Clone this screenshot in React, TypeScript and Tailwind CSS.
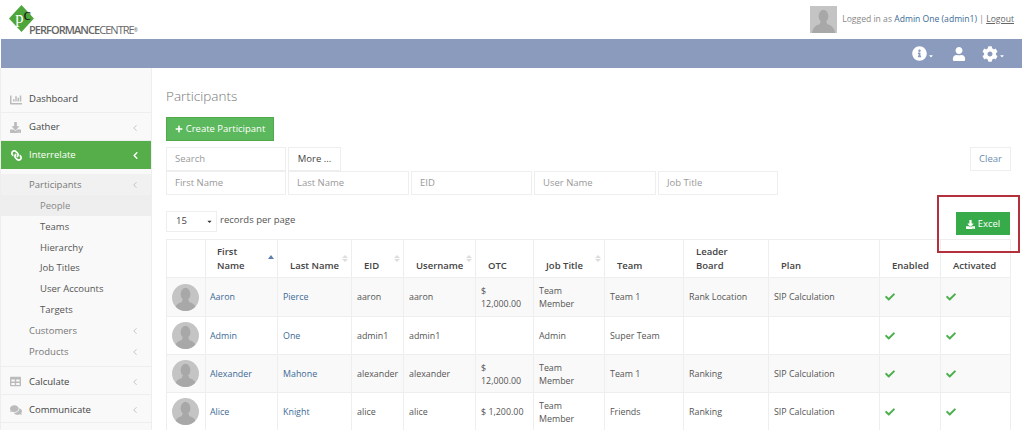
import { ChevronLeft } from "lucide-react";
import { FaCaretDown, FaChartBar, FaCheck, FaCog, FaComments, FaDownload, FaInfoCircle, FaLink, FaPlus, FaTable, FaUser } from "react-icons/fa";

const people = [
  { first: "Aaron", last: "Pierce", eid: "aaron", user: "aaron", otc: ["$", "12,000.00"], job: ["Team", "Member"], team: "Team 1", board: "Rank Location", plan: "SIP Calculation" },
  { first: "Admin", last: "One", eid: "admin1", user: "admin1", otc: [], job: ["Admin"], team: "Super Team", board: "", plan: "" },
  { first: "Alexander", last: "Mahone", eid: "alexander", user: "alexander", otc: ["$", "12,000.00"], job: ["Team", "Member"], team: "Team 1", board: "Ranking", plan: "SIP Calculation" },
  { first: "Alice", last: "Knight", eid: "alice", user: "alice", otc: ["$ 1,200.00"], job: ["Team", "Member"], team: "Friends", board: "Ranking", plan: "SIP Calculation" },
];

function Silhouette({ round }: { round?: boolean }) {
  return (
    <svg viewBox="0 0 28 28" className={round ? "h-[27px] w-[27px] rounded-full" : "h-[27px] w-[27px]"}>
      <rect width="28" height="28" fill="#c4c4c4" />
      <ellipse cx="14" cy="10.5" rx="5" ry="6.5" fill="#a8a8a8" />
      <path d="M11 16 L17 16 L18 19 Q25 20.5 26 28 L2 28 Q3 20.5 10 19 Z" fill="#a8a8a8" />
    </svg>
  );
}

function SortArrows({ active }: { active?: boolean }) {
  return (
    <span className="absolute right-[3px] top-[15px] flex flex-col gap-[1px]">
      <span className={active ? "h-0 w-0 border-x-[3px] border-b-[4px] border-x-transparent border-b-[#5b7fb0]" : "h-0 w-0 border-x-[3px] border-b-[3px] border-x-transparent border-b-[#dddddd]"} />
      {!active && <span className="h-0 w-0 border-x-[3px] border-t-[3px] border-x-transparent border-t-[#dddddd]" />}
    </span>
  );
}

function SideItem({ icon, label, top }: { icon: React.ReactNode; label: string; top?: boolean }) {
  return (
    <div className="flex h-[28px] items-center border-b border-[#eeeeee] pl-[9px] pr-[10px] pt-[2px] text-[#444444]">
      <span className="flex w-[19px] text-[#bbbbbb]">{icon}</span>
      <span>{label}</span>
      {!top && <ChevronLeft size={10} className="ml-auto mr-[1px] text-[#bbbbbb]" />}
    </div>
  );
}

function SubItem({ label, chevron }: { label: string; chevron?: boolean }) {
  return (
    <div className="flex h-[20.8px] items-center pl-[28px] pr-[11px] pt-[2px] text-[#777777]">
      <span>{label}</span>
      {chevron && <ChevronLeft size={10} className="ml-auto text-[#bbbbbb]" />}
    </div>
  );
}

function Leaf({ label, active }: { label: string; active?: boolean }) {
  return (
    <div className={active ? "flex h-[20.8px] items-center bg-[#eeeeee] pl-[39px] pt-[2px] text-[#888888]" : "flex h-[20.8px] items-center pl-[39px] pt-[2px] text-[#555555]"}>
      {label}
    </div>
  );
}

function Field({ label, width }: { label: string; width: string }) {
  return (
    <div className={`flex h-[24px] items-center border border-[#eeeeee] pl-[8px] text-[#999999] ${width}`}>{label}</div>
  );
}

export default function App() {
  return (
    <div className="relative h-[430px] w-[1024px] overflow-hidden bg-white font-['Open_Sans',sans-serif] text-[9.5px] text-[#555555]">
      {/* Top header */}
      <div className="flex h-[39px] items-center justify-between pl-[9px] pr-[10px]">
        <div className="relative h-[39px] w-[140px]">
          <svg viewBox="0 0 26 26" className="absolute left-0 top-[5px] h-[27px] w-[27px]">
            <path d="M12 0 L24 13 L12 26 L0 13 Z" fill="#4ea53a" />
            <text x="6" y="17" fontFamily="Liberation Serif, serif" fontSize="16" fill="#ffffff">p</text>
            <text x="14" y="14" fontFamily="Liberation Serif, serif" fontSize="16" fill="#14281a">c</text>
          </svg>
          <span className="absolute left-[20px] top-[24px] text-[11px] leading-[11px] tracking-[-0.95px] text-[#666666]">
            <span className="font-semibold">PERFORMANCE</span>
            <span>CENTRE</span>
            <sup className="text-[5px]">®</sup>
          </span>
        </div>
        <div className="flex items-center gap-[5px]">
          <Silhouette />
          <span className="text-[8.6px] text-[#888888]">
            Logged in as <span className="text-[#3b6a96]">Admin One (admin1)</span> | <span className="text-[#666666] underline">Logout</span>
          </span>
        </div>
      </div>

      {/* Blue bar */}
      <div className="ml-[1px] mr-[2px] flex h-[29px] items-center justify-end bg-[#8a9bbd] pr-[17px] text-white">
        <FaInfoCircle size={15} />
        <FaCaretDown size={6} className="ml-[1px] mt-[5px]" />
        <FaUser size={14} className="ml-[18px]" />
        <FaCog size={16} className="ml-[16px]" />
        <FaCaretDown size={6} className="ml-[1px] mt-[5px]" />
      </div>

      <div className="flex">
        {/* Sidebar */}
        <div className="h-[362px] w-[152px] shrink-0 border-x border-[#eeeeee] bg-[#f9f9f9] pt-[17px]">
          <SideItem icon={<FaChartBar size={12} />} label="Dashboard" top />
          <SideItem icon={<FaDownload size={11} />} label="Gather" />
          <div className="flex h-[28px] items-center bg-[#55ae49] pl-[10px] pr-[10px] pt-[1px] text-white">
            <span className="flex w-[18px]"><FaLink size={11} className="-scale-x-100" /></span>
            <span>Interrelate</span>
            <ChevronLeft size={11} strokeWidth={3} className="ml-auto" />
          </div>
          <div className="pt-[5px]">
            <div className="bg-[#f1f1f1]"><SubItem label="Participants" chevron /></div>
            <Leaf label="People" active />
            <Leaf label="Teams" />
            <Leaf label="Hierarchy" />
            <Leaf label="Job Titles" />
            <Leaf label="User Accounts" />
            <Leaf label="Targets" />
            <SubItem label="Customers" chevron />
            <SubItem label="Products" chevron />
          </div>
          <div className="mt-[5px] border-t border-[#eeeeee]">
            <SideItem icon={<FaTable size={11} />} label="Calculate" />
            <SideItem icon={<FaComments size={12} />} label="Communicate" />
          </div>
        </div>

        {/* Main content */}
        <div className="w-[872px] pl-[14px] pr-[13px]">
          <h1 className="mt-[17px] text-[13.5px] leading-[22px] font-light text-[#777777]">Participants</h1>
          <button className="mt-[10px] flex h-[24px] w-[108px] items-center justify-center gap-[3px] border border-[#52a949] bg-[#5cb85c] text-white">
            <FaPlus size={8} />
            Create Participant
          </button>

          <div className="mt-[6px] flex h-[24px] items-stretch gap-[2px]">
            <Field label="Search" width="w-[120px] pt-[1px]" />
            <div className="flex w-[53px] items-center justify-center border border-[#eeeeee] pt-[1px] text-[#444444]">More ...</div>
            <div className="ml-auto flex w-[41px] items-center justify-center border border-[#eeeeee] pt-[1px] text-[#6d8db0]">Clear</div>
          </div>
          <div className="flex gap-[2px]">
            <Field label="First Name" width="w-[120px]" />
            <Field label="Last Name" width="w-[121px]" />
            <Field label="EID" width="w-[121px]" />
            <Field label="User Name" width="w-[122px]" />
            <Field label="Job Title" width="w-[120px]" />
          </div>

          <div className="mt-[16px] flex items-start justify-between">
            <div className="flex items-center gap-[3px]">
              <div className="flex h-[21px] w-[51px] items-center justify-between border border-[#eeeeee] pl-[9px] pr-[3px] text-[#444444]">
                15
                <FaCaretDown size={7} className="text-[#333333]" />
              </div>
              <span className="-mt-[3px] text-[#555555]">records per page</span>
            </div>
            <button className="mr-[1px] mt-[1px] flex h-[23px] w-[54px] items-center justify-center gap-[3px] bg-[#37aa4a] pt-[1px] text-white">
              <FaDownload size={9} />
              Excel
            </button>
          </div>

          <table className="mt-[4px] w-[844px] table-fixed border-collapse text-[8.9px]">
            <thead className="text-[9.5px]">
              <tr className="h-[38px] text-[#444444]">
                <th className="w-[39px] border border-[#eeeeee]"></th>
                <th className="relative w-[72px] border border-[#eeeeee] pb-[4px] pl-[11px] pr-[20px] text-left align-bottom font-semibold leading-[14px]">First Name<SortArrows active /></th>
                <th className="relative w-[74px] border border-[#eeeeee] pb-[4px] pl-[12px] text-left align-bottom font-semibold leading-[14px]">Last Name<SortArrows /></th>
                <th className="relative w-[52px] border border-[#eeeeee] pb-[4px] pl-[12px] text-left align-bottom font-semibold leading-[14px]">EID<SortArrows /></th>
                <th className="relative w-[72px] border border-[#eeeeee] pb-[4px] pl-[12px] text-left align-bottom font-semibold leading-[14px]">Username<SortArrows /></th>
                <th className="w-[58px] border border-[#eeeeee] pb-[4px] pl-[12px] text-left align-bottom font-semibold leading-[14px]">OTC</th>
                <th className="relative w-[71px] border border-[#eeeeee] pb-[4px] pl-[12px] text-left align-bottom font-semibold leading-[14px]">Job Title<SortArrows /></th>
                <th className="w-[79px] border border-[#eeeeee] pb-[4px] pl-[12px] text-left align-bottom font-semibold leading-[14px]">Team</th>
                <th className="w-[85px] border border-[#eeeeee] pb-[4px] pl-[12px] pr-[20px] text-left align-bottom font-semibold leading-[14px]">Leader Board</th>
                <th className="w-[111px] border border-[#eeeeee] pb-[4px] pl-[12px] text-left align-bottom font-semibold leading-[14px]">Plan</th>
                <th className="w-[61px] border border-[#eeeeee] pb-[4px] pl-[12px] text-left align-bottom font-semibold leading-[14px]">Enabled</th>
                <th className="w-[70px] border border-[#eeeeee] pb-[4px] pl-[12px] text-left align-bottom font-semibold leading-[14px]">Activated</th>
              </tr>
            </thead>
            <tbody>
              {people.map((p, i) => (
                <tr key={p.eid} className={i % 2 === 0 ? (i === 0 ? "h-[39px] bg-[#f9f9f9]" : "h-[38px] bg-[#f9f9f9]") : "h-[38px]"}>
                  <td className="border border-[#eeeeee] pl-[5px]"><Silhouette round /></td>
                  <td className="border border-[#eeeeee] pl-[4px] text-[#3b6a96]">{p.first}</td>
                  <td className="border border-[#eeeeee] pl-[5px] text-[#3b6a96]">{p.last}</td>
                  <td className="border border-[#eeeeee] pl-[5px]">{p.eid}</td>
                  <td className="border border-[#eeeeee] pl-[5px]">{p.user}</td>
                  <td className="border border-[#eeeeee] pl-[5px] leading-[13px]">{p.otc.map((t) => <div key={t}>{t}</div>)}</td>
                  <td className="border border-[#eeeeee] pl-[5px] leading-[13px]">{p.job.map((t) => <div key={t}>{t}</div>)}</td>
                  <td className="border border-[#eeeeee] pl-[5px]">{p.team}</td>
                  <td className="border border-[#eeeeee] pl-[5px]">{p.board}</td>
                  <td className="border border-[#eeeeee] pl-[5px]">{p.plan}</td>
                  <td className="border border-[#eeeeee] pl-[5px] text-[#4cae4c]"><FaCheck size={10} /></td>
                  <td className="border border-[#eeeeee] pl-[5px] text-[#4cae4c]"><FaCheck size={10} /></td>
                </tr>
              ))}
            </tbody>
          </table>
        </div>
      </div>

      {/* Annotation box drawn over the page */}
      <div className="absolute left-[937px] top-[195px] h-[58px] w-[83px] border-2 border-[#b3303c]" />
    </div>
  );
}
